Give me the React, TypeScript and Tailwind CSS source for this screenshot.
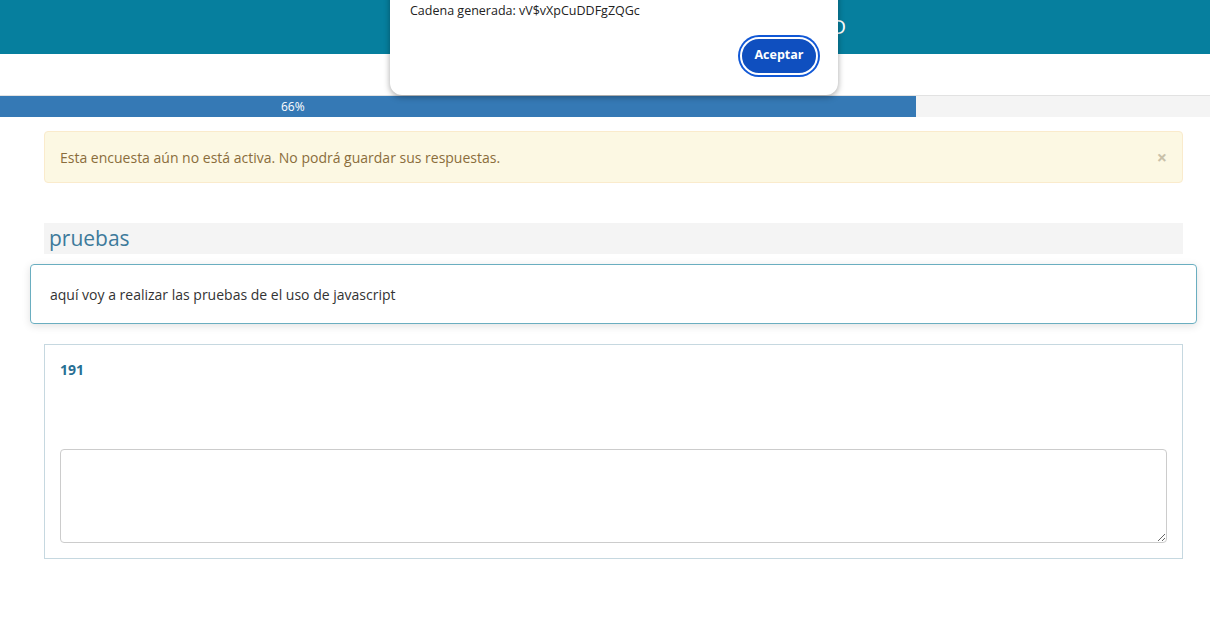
import React from 'react';

const font = { fontFamily: '"Open Sans", "Liberation Sans", sans-serif' };

function Header() {
  return (
    <header className="h-[54px] bg-[#067f9e] flex items-center justify-center pl-[62px]">
      <h1 className="text-white text-[20px] tracking-wide">ENCUESTA DE PRUEBAS DE JAVASCRIPT - ID</h1>
    </header>
  );
}

function ProgressBar({ value }: { value: number }) {
  return (
    <div className="mt-[41px] border-t border-[#e2e2e2] h-[22px] bg-[#f4f4f4] flex">
      <div className="h-full w-[916px] bg-[#3579b5] text-white text-[12px] leading-[21px] pl-[281px]">{value}%</div>
    </div>
  );
}

function Dialog() {
  return (
    <div className="absolute left-[390px] top-[-20px] w-[448px] h-[115px] bg-white rounded-[12px] shadow-[0_2px_6px_rgba(0,0,0,0.35)] px-[20px] pt-[22px]">
      <p className="text-[12.5px] text-[#222]">Cadena generada: vV$vXpCuDDFgZQGc</p>
      <div className="flex justify-end mt-[16px]">
        <button className="h-[38px] w-[78px] rounded-full bg-[#0f4fbf] text-white text-[12.5px] font-bold border-[2px] border-white ring-[2px] ring-[#1158d6]">
          Aceptar
        </button>
      </div>
    </div>
  );
}

export default function App() {
  return (
    <div className="relative w-[1210px] h-[640px] bg-white overflow-hidden" style={font}>
      <Header />
      <ProgressBar value={66} />
      <Dialog />

      <main className="pl-[44px] pr-[27px] pt-[14px]">
        <div className="h-[52px] bg-[#fcf8e3] border border-[#faebcc] rounded-[4px] flex items-center justify-between pl-[15px] pr-[15px] text-[#8a6d3b] text-[14px]">
          <span>Esta encuesta aún no está activa. No podrá guardar sus respuestas.</span>
          <span className="text-[#c9c1a9] text-[18px] font-bold leading-none">×</span>
        </div>

        <div className="mt-[40px] h-[31px] bg-[#f4f4f4] pl-[5px]">
          <h2 className="text-[21px] leading-[31px] text-[#3d7a9b]">pruebas</h2>
        </div>

        <div className="mt-[10px] -mx-[14px] h-[60px] border border-[#6aaec0] rounded-[4px] shadow-[0_2px_8px_rgba(0,0,0,0.12)] flex items-center pl-[19px] text-[14px] text-[#333]">
          aquí voy a realizar las pruebas de el uso de javascript
        </div>

        <div className="mt-[20px] border border-[#c6d8e0] px-[15px] pt-[14px] pb-[15px]">
          <p className="text-[14px] font-bold text-[#286f94]">191</p>
          <textarea className="mt-[69px] block w-full h-[94px] border border-[#cccccc] rounded-[4px] resize-y" />
        </div>
      </main>
    </div>
  );
}
